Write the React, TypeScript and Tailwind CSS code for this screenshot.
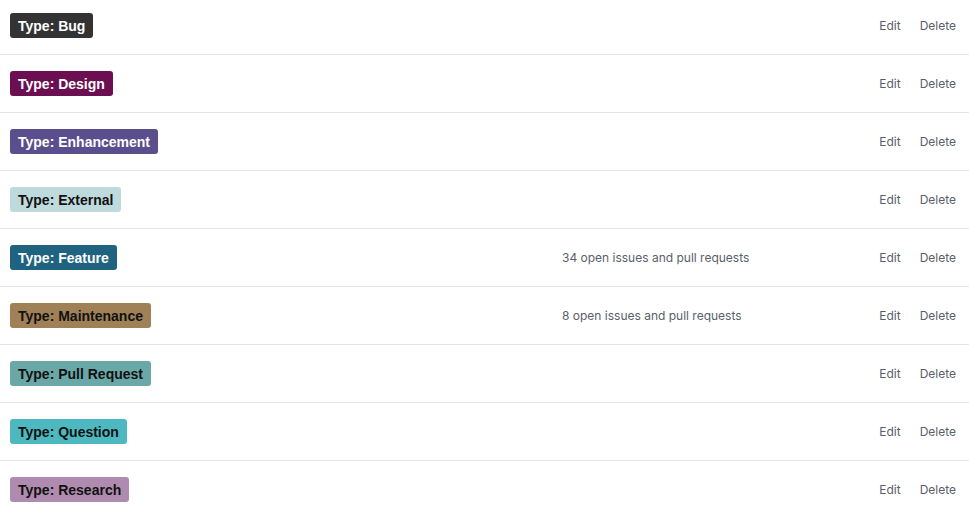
import React from 'react'

interface Label {
  name:    string
  color:   string
  dark:    boolean
  count?:  number
}

const labels: Label[] = [
  { name: 'Type: Bug',          color: 'bg-[#333333]', dark: true },
  { name: 'Type: Design',       color: 'bg-[#6b0f52]', dark: true },
  { name: 'Type: Enhancement',  color: 'bg-[#5a4e8c]', dark: true },
  { name: 'Type: External',     color: 'bg-[#bfdadc]', dark: false },
  { name: 'Type: Feature',      color: 'bg-[#1f6380]', dark: true, count: 34 },
  { name: 'Type: Maintenance',  color: 'bg-[#a08157]', dark: false, count: 8 },
  { name: 'Type: Pull Request', color: 'bg-[#6aa8a8]', dark: false },
  { name: 'Type: Question',     color: 'bg-[#4db8bf]', dark: false },
  { name: 'Type: Research',     color: 'bg-[#b08bb0]', dark: false },
]

function LabelRow({ label }: { label: Label }) {
  return (
    <div className="flex h-[58px] items-center border-b border-[#e1e4e8] pl-[10px] pr-[13px]">
      <div className="w-[552px] shrink-0">
        <span
          className={`inline-block h-[25px] rounded-[3px] px-[8px] text-[14px] font-bold leading-[26px] ${label.color} ${
            label.dark ? 'text-white' : 'text-[#111111]'
          }`}
        >
          {label.name}
        </span>
      </div>
      <div className="flex-1 font-['Inter',sans-serif] text-[12px] text-[#586069]">
        {label.count !== undefined && `${label.count} open issues and pull requests`}
      </div>
      <div className="flex gap-[19px] font-['Inter',sans-serif] text-[12px] text-[#586069]">
        <button>Edit</button>
        <button>Delete</button>
      </div>
    </div>
  )
}

export default function App() {
  return (
    <div className="h-[514px] w-[969px] overflow-hidden bg-white font-['Liberation_Sans',Arial,sans-serif]">
      <div className="-mt-[3px]">
        {labels.map((l) => (
          <LabelRow key={l.name} label={l} />
        ))}
      </div>
    </div>
  )
}
